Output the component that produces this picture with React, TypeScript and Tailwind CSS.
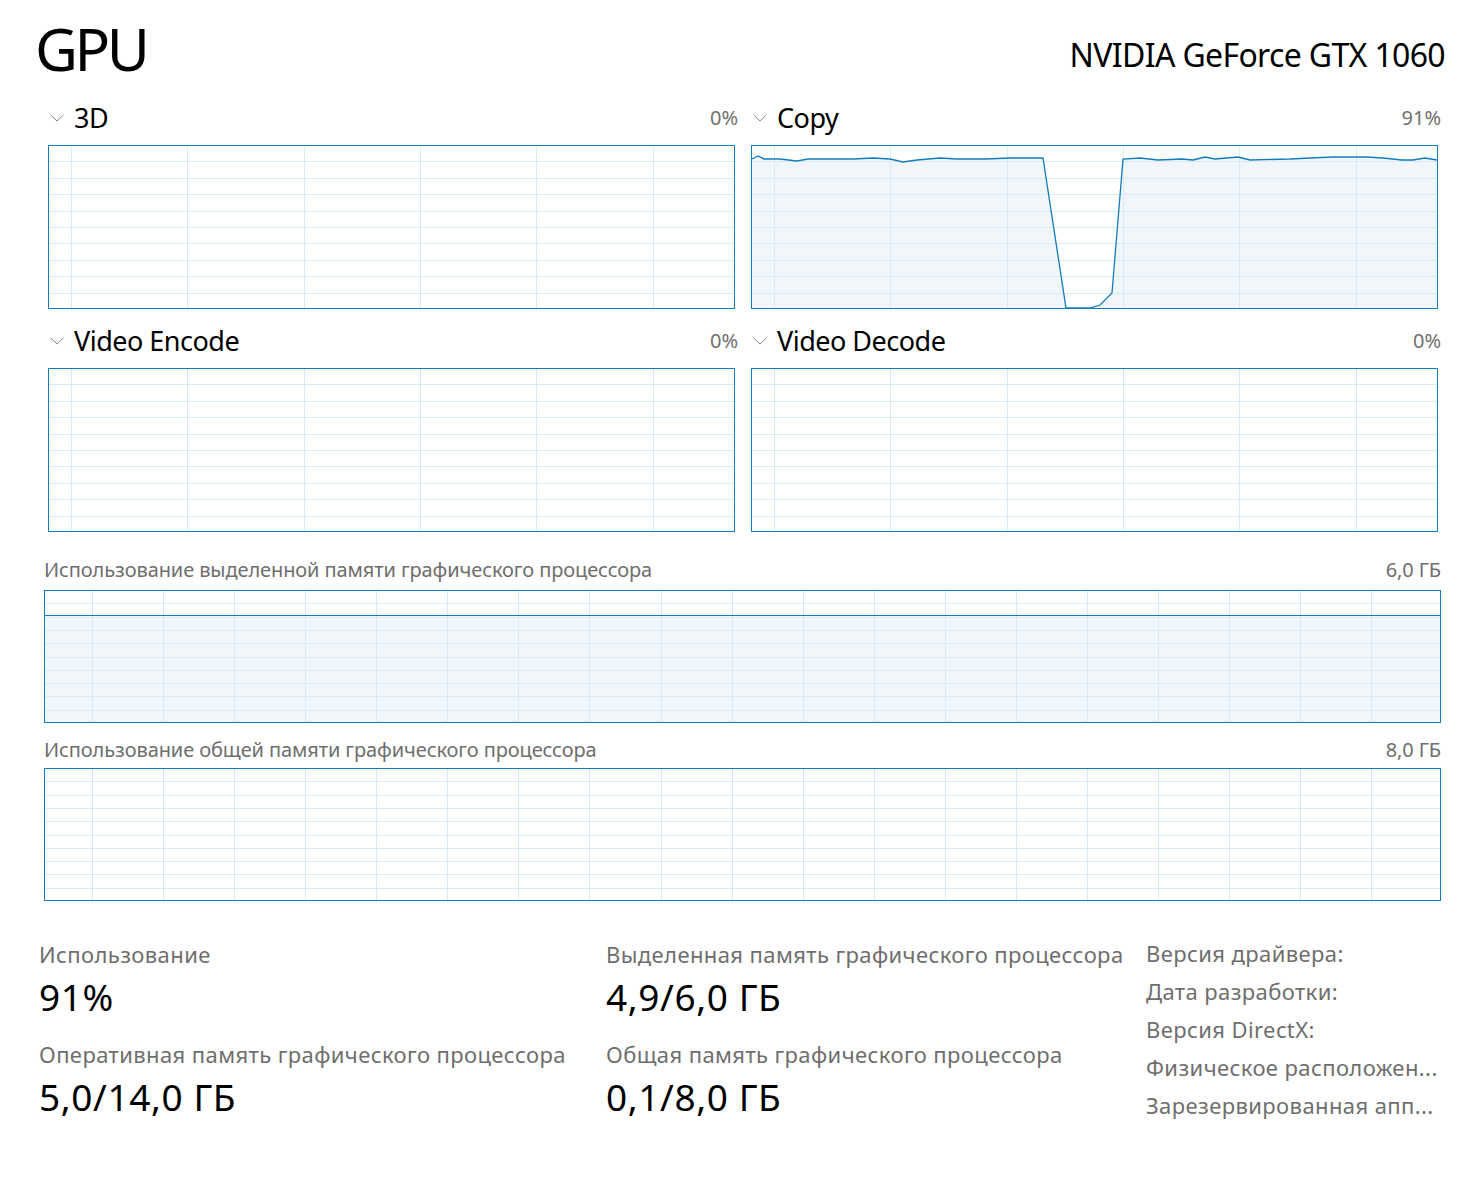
import React from 'react'

const BLUE = '#117dbb'
const GRID = '#d9eaf4'
const FILL = '#f1f6fa'

type Pt = [number, number]

const copyPoints: Pt[] = [
  [1, 14], [7, 11], [13, 14], [29, 14], [46, 16], [57, 14], [79, 14], [102, 14], [122, 13], [139, 14],
  [152, 17], [166, 15], [189, 13], [206, 14], [234, 14], [259, 13], [279, 13], [292, 13], [315, 163],
  [339, 163], [349, 160], [361, 148], [372, 14], [389, 13], [407, 15], [431, 14], [442, 15], [454, 12],
  [464, 14], [487, 12], [499, 15], [539, 14], [559, 13], [582, 12], [616, 12], [632, 13], [651, 15],
  [662, 15], [674, 13], [686, 15],
]

type ChartProps = {
  w: number
  h: number
  rows: number
  colStart: number
  colStep: number
  points?: Pt[]
  level?: number
}

const Chart = ({ w, h, rows, colStart, colStep, points, level }: ChartProps) => {
  const hLines = Array.from({ length: rows - 1 }, (_, i) => Math.round((h * (i + 1)) / rows) + 0.5)
  const vLines: number[] = []
  for (let x = colStart; x < w - 2; x += colStep) vLines.push(Math.round(x) + 0.5)
  const line = points ? points.map(([x, y]) => `${x},${y}`).join(' ') : ''

  return (
    <svg width={w} height={h} className="block">
      {points && <polygon points={`${line} ${w - 1},${h - 1} 1,${h - 1}`} fill={FILL} />}
      {level !== undefined && <rect x={1} y={level} width={w - 2} height={h - 1 - level} fill={FILL} />}
      {hLines.map((y) => (
        <line key={'h' + y} x1={1} x2={w - 1} y1={y} y2={y} stroke={GRID} shapeRendering="crispEdges" />
      ))}
      {vLines.map((x) => (
        <line key={'v' + x} x1={x} x2={x} y1={1} y2={h - 1} stroke={GRID} shapeRendering="crispEdges" />
      ))}
      {points && <polyline points={line} fill="none" stroke={BLUE} strokeWidth={1.3} />}
      {level !== undefined && (
        <line x1={1} x2={w - 1} y1={level + 0.5} y2={level + 0.5} stroke={BLUE} shapeRendering="crispEdges" />
      )}
      <rect x={0.5} y={0.5} width={w - 1} height={h - 1} fill="none" stroke={BLUE} shapeRendering="crispEdges" />
    </svg>
  )
}

const Chevron = () => (
  <svg width="14" height="8" viewBox="0 0 14 8" className="block">
    <polyline points="0.5,0.8 7,7 13.5,0.8" fill="none" stroke="#7a7a7a" strokeWidth="0.9" />
  </svg>
)

const Engine = ({ name, value, points }: { name: string; value: string; points?: Pt[] }) => (
  <div className="w-[690px]">
    <div className="flex items-center justify-between h-[27px] mb-[14px]">
      <div className="flex items-center">
        <div className="ml-[2px] mr-[10px]">
          <Chevron />
        </div>
        <span className="text-[27px] leading-[27px] tracking-[-0.5px]">{name}</span>
      </div>
      <span className="text-[20px] leading-[20px] text-[#707070]">{value}</span>
    </div>
    <Chart w={687} h={164} rows={10} colStart={23} colStep={116.3} points={points} />
  </div>
)

const Stat = ({ label, value, className }: { label: string; value: string; className?: string }) => (
  <div className={className}>
    <div className="text-[22px] leading-[22px] tracking-[0.4px] text-[#6e6e6e] whitespace-nowrap">{label}</div>
    <div className="text-[37px] leading-[37px] tracking-[0.6px] mt-[13px]">{value}</div>
  </div>
)

const details = [
  'Версия драйвера:',
  'Дата разработки:',
  'Версия DirectX:',
  'Физическое расположен...',
  'Зарезервированная апп...',
]

export default function App() {
  return (
    <div className="w-[1457px] h-[1184px] bg-white text-black font-['Segoe_UI','Noto_Sans',sans-serif] overflow-hidden">
      <header className="flex items-start justify-between pl-[35px] pr-[12px] pt-[19px]">
        <div className="text-[59px] leading-[59px] tracking-[-3.5px]">GPU</div>
        <div className="text-[32px] leading-[32px] tracking-[-0.65px] mt-[20px]">NVIDIA GeForce GTX 1060</div>
      </header>

      <div className="grid grid-cols-[690px_690px] gap-x-[13px] gap-y-[18px] pl-[48px] mt-[26px]">
        <Engine name="3D" value="0%" />
        <Engine name="Copy" value="91%" points={copyPoints} />
        <Engine name="Video Encode" value="0%" />
        <Engine name="Video Decode" value="0%" />
      </div>

      <section className="pl-[44px] w-[1441px] mt-[28px]">
        <div className="flex justify-between text-[20px] leading-[20px] tracking-[-0.1px] text-[#6e6e6e] mb-[10px]">
          <span>Использование выделенной памяти графического процессора</span>
          <span>6,0 ГБ</span>
        </div>
        <Chart w={1397} h={133} rows={10} colStart={47.7} colStep={71.1} level={25} />

        <div className="flex justify-between text-[20px] leading-[20px] tracking-[-0.1px] text-[#6e6e6e] mt-[17px] mb-[8px]">
          <span>Использование общей памяти графического процессора</span>
          <span>8,0 ГБ</span>
        </div>
        <Chart w={1397} h={133} rows={10} colStart={47.7} colStep={71.1} />
      </section>

      <section className="flex mt-[33px] pl-[39px]">
        <div className="w-[567px] pt-[9px]">
          <Stat label="Использование" value="91%" />
          <Stat label="Оперативная память графического процессора" value="5,0/14,0 ГБ" className="mt-[28px]" />
        </div>
        <div className="w-[540px] pt-[9px]">
          <Stat label="Выделенная память графического процессора" value="4,9/6,0 ГБ" />
          <Stat label="Общая память графического процессора" value="0,1/8,0 ГБ" className="mt-[28px]" />
        </div>
        <div className="text-[22px] leading-[38px] tracking-[0.4px] text-[#6e6e6e] whitespace-nowrap">
          {details.map((d) => (
            <div key={d}>{d}</div>
          ))}
        </div>
      </section>
    </div>
  )
}
